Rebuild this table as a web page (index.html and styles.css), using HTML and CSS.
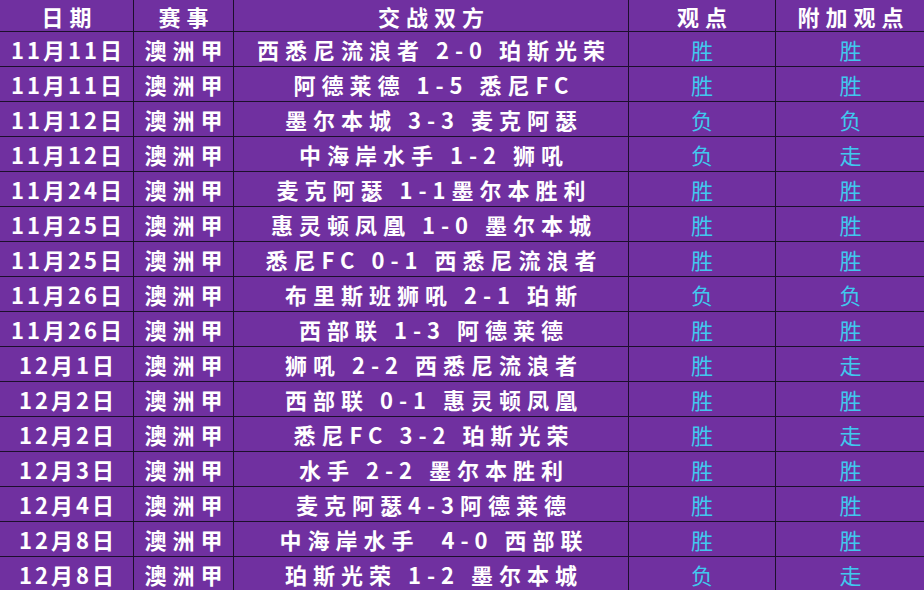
FILE: index.html
```html
<!DOCTYPE html>
<html lang="zh">
<head>
<meta charset="utf-8">
<link rel="stylesheet" href="styles.css">
</head>
<body>
<table class="sheet">
<colgroup>
<col class="c-date"><col class="c-league"><col class="c-match"><col class="c-view"><col class="c-extra">
</colgroup>
<thead>
<tr class="head"><th>日期</th><th>赛事</th><th>交战双方</th><th>观点</th><th>附加观点</th></tr>
</thead>
<tbody>
<tr><td class="date">11月11日</td><td class="league">澳洲甲</td><td class="match">西悉尼流浪者 2-0 珀斯光荣</td><td class="pick">胜</td><td class="pick">胜</td></tr>
<tr><td class="date">11月11日</td><td class="league">澳洲甲</td><td class="match">阿德莱德 1-5 悉尼FC</td><td class="pick">胜</td><td class="pick">胜</td></tr>
<tr><td class="date">11月12日</td><td class="league">澳洲甲</td><td class="match">墨尔本城 3-3 麦克阿瑟</td><td class="pick">负</td><td class="pick">负</td></tr>
<tr><td class="date">11月12日</td><td class="league">澳洲甲</td><td class="match">中海岸水手 1-2 狮吼</td><td class="pick">负</td><td class="pick">走</td></tr>
<tr><td class="date">11月24日</td><td class="league">澳洲甲</td><td class="match">麦克阿瑟 1-1墨尔本胜利</td><td class="pick">胜</td><td class="pick">胜</td></tr>
<tr><td class="date">11月25日</td><td class="league">澳洲甲</td><td class="match">惠灵顿凤凰 1-0 墨尔本城</td><td class="pick">胜</td><td class="pick">胜</td></tr>
<tr><td class="date">11月25日</td><td class="league">澳洲甲</td><td class="match">悉尼FC 0-1 西悉尼流浪者</td><td class="pick">胜</td><td class="pick">胜</td></tr>
<tr><td class="date">11月26日</td><td class="league">澳洲甲</td><td class="match">布里斯班狮吼 2-1 珀斯</td><td class="pick">负</td><td class="pick">负</td></tr>
<tr><td class="date">11月26日</td><td class="league">澳洲甲</td><td class="match">西部联 1-3 阿德莱德</td><td class="pick">胜</td><td class="pick">胜</td></tr>
<tr><td class="date">12月1日</td><td class="league">澳洲甲</td><td class="match">狮吼 2-2 西悉尼流浪者</td><td class="pick">胜</td><td class="pick">走</td></tr>
<tr><td class="date">12月2日</td><td class="league">澳洲甲</td><td class="match">西部联 0-1 惠灵顿凤凰</td><td class="pick">胜</td><td class="pick">胜</td></tr>
<tr><td class="date">12月2日</td><td class="league">澳洲甲</td><td class="match">悉尼FC 3-2 珀斯光荣</td><td class="pick">胜</td><td class="pick">走</td></tr>
<tr><td class="date">12月3日</td><td class="league">澳洲甲</td><td class="match">水手 2-2 墨尔本胜利</td><td class="pick">胜</td><td class="pick">胜</td></tr>
<tr><td class="date">12月4日</td><td class="league">澳洲甲</td><td class="match">麦克阿瑟4-3阿德莱德</td><td class="pick">胜</td><td class="pick">胜</td></tr>
<tr><td class="date">12月8日</td><td class="league">澳洲甲</td><td class="match">中海岸水手&nbsp;&nbsp;4-0 西部联</td><td class="pick">胜</td><td class="pick">胜</td></tr>
<tr><td class="date">12月8日</td><td class="league">澳洲甲</td><td class="match">珀斯光荣 1-2 墨尔本城</td><td class="pick">负</td><td class="pick">走</td></tr>
</tbody>
</table>
</body>
</html>
```

FILE: styles.css
```css
html, body {
  margin: 0;
  padding: 0;
  background: #7030a0;
  overflow: hidden;
}

.sheet {
  border-collapse: collapse;
  table-layout: fixed;
  width: 926px;
  margin-top: -1px;
  margin-left: -1px;
  background: #7030a0;
  font-family: "Noto Sans CJK SC", "Noto Sans", sans-serif;
  font-weight: 700;
  color: #ffffff;
}

.c-date { width: 134px; }
.c-league { width: 100px; }
.c-match { width: 395px; }
.c-view { width: 147px; }
.c-extra { width: 150px; }

.sheet th,
.sheet td {
  border: 1px solid #1c0f2c;
  padding: 0;
  text-align: center;
  vertical-align: middle;
  white-space: nowrap;
  overflow: hidden;
  font-size: 22px;
  letter-spacing: 4px;
  text-indent: 4px;
  line-height: 34px;
  height: 34px;
}

.sheet .head th {
  height: 31px;
  line-height: 30px;
  font-weight: 700;
  letter-spacing: 6px;
  text-indent: 6px;
}

.sheet td.date {
  letter-spacing: 3px;
  text-indent: 3px;
}

.sheet td.league {
  letter-spacing: 6px;
  text-indent: 6px;
}

.sheet td.match {
  letter-spacing: 6px;
  text-indent: 6px;
}

.sheet td.pick {
  color: #40c8ee;
  font-weight: 400;
  letter-spacing: 0;
  text-indent: 0;
}
```
